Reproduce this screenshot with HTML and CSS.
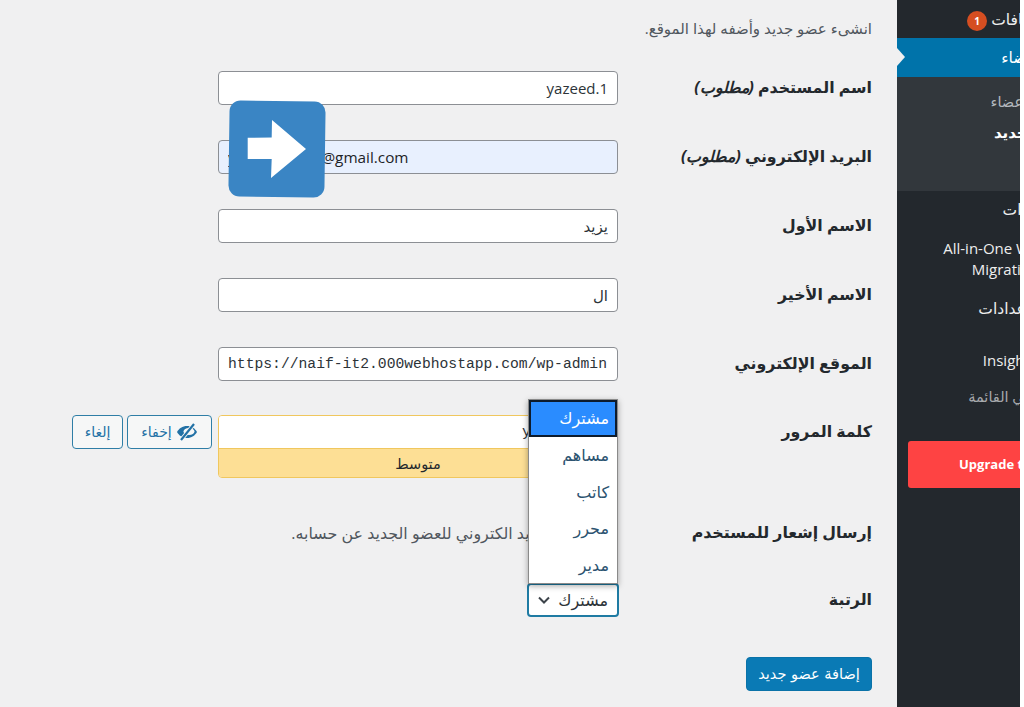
FILE: index.html
```html
<!DOCTYPE html>
<html lang="ar">
<head>
    <meta charset="UTF-8">
    <title>إضافة عضو جديد</title>
    <link rel="stylesheet" href="styles.css">
</head>
<body>
<div class="page">
    <main class="content" dir="rtl">
        <p class="intro">انشىء عضو جديد وأضفه لهذا الموقع.</p>

        <div class="row">
            <label class="rowLabel">اسم المستخدم <em>(مطلوب)</em></label>
            <div class="field"><input class="textInput" type="text" value="yazeed.1"></div>
        </div>
        <div class="row">
            <label class="rowLabel">البريد الإلكتروني <em>(مطلوب)</em></label>
            <div class="field"><input class="textInput emailInput" dir="ltr" type="text" value="yazeed.naifl1@gmail.com"></div>
        </div>
        <div class="row">
            <label class="rowLabel">الاسم الأول</label>
            <div class="field"><input class="textInput" type="text" value="يزيد"></div>
        </div>
        <div class="row">
            <label class="rowLabel">الاسم الأخير</label>
            <div class="field"><input class="textInput" type="text" value="ال"></div>
        </div>
        <div class="row">
            <label class="rowLabel">الموقع الإلكتروني</label>
            <div class="field"><input class="textInput urlInput" dir="ltr" type="text" value="https://naif-it2.000webhostapp.com/wp-admin"></div>
        </div>
        <div class="row passRow">
            <label class="rowLabel">كلمة المرور</label>
            <div class="field passField">
                <div class="passBox">
                    <input class="passInput" type="text" value="y7Hq2#kP9x">
                    <div class="strength">متوسط</div>
                </div>
                <button class="ghostBtn hideBtn" type="button">
                    <svg width="22" height="18" viewBox="0 0 22 18">
                        <path d="M11 3C6.500 3 2.800 5.600 1 9c1.800 3.400 5.500 6 10 6s8.200-2.600 10-6c-1.800-3.400-5.500-6-10-6z" fill="#2271a5"/>
                        <ellipse cx="13" cy="8.500" rx="5.500" ry="3.500" fill="#f6f7f7"/>
                        <path d="M5 17L18 1" stroke="#f6f7f7" stroke-width="4"/>
                        <path d="M5 17L18 1" stroke="#2271a5" stroke-width="2.200"/>
                    </svg>
                    إخفاء
                </button>
                <button class="ghostBtn" type="button">إلغاء</button>
            </div>
        </div>
        <div class="row notifyRow">
            <label class="rowLabel">إرسال إشعار للمستخدم</label>
            <div class="field notifyField">
                <input class="check" type="checkbox">
                <span>أرسل البريد الكتروني للعضو الجديد عن حسابه.</span>
            </div>
        </div>
        <div class="row roleRow">
            <label class="rowLabel">الرتبة</label>
            <div class="field">
                <div class="roleSelect">
                    <span>مشترك</span>
                    <svg width="14" height="10" viewBox="0 0 14 10"><path d="M2 2.500l5 5 5-5" fill="none" stroke="#3c434a" stroke-width="2"/></svg>
                    <ul class="roleMenu">
                        <li class="currentRole">مشترك</li>
                        <li>مساهم</li>
                        <li>كاتب</li>
                        <li>محرر</li>
                        <li>مدير</li>
                    </ul>
                </div>
            </div>
        </div>
        <button class="submitBtn" type="button">إضافة عضو جديد</button>

        <svg class="playBadge" width="108" height="108" viewBox="0 0 108 108">
            <rect x="5" y="5" width="96" height="96" rx="11" fill="#3a85c4" transform="rotate(0.8 53 53)"/>
            <path d="M23.700 41.700L47.700 41.500 48 24 82 53 47 82 47.700 63 23.700 63z" fill="#fff"/>
        </svg>
    </main>

    <nav class="sidebar">
        <ul class="menu" dir="rtl">
            <li class="menuItem pluginsItem">الإضافات <b class="badge">1</b></li>
            <li class="menuItem activeItem">الأعضاء</li>
            <li class="subMenu">
                <div class="subItem">كل الأعضاء</div>
                <div class="subItem currentSub">عضو جديد</div>
            </li>
            <li class="menuItem toolsItem">الأدوات</li>
            <li class="menuItem migrationItem">All-in-One WP Migration</li>
            <li class="menuItem settingsItem">الإعدادات</li>
            <li class="menuItem insightsItem">Insights</li>
            <li class="menuItem collapseItem">طي القائمة</li>
            <li class="upgrade">Upgrade to Pro</li>
        </ul>
    </nav>
</div>
</body>
</html>
```

FILE: styles.css
```css
* {
    margin: 0;
    padding: 0;
    box-sizing: border-box;
}

ul {
    list-style: none;
}

html, body {
    height: 100%;
    background-color: #fff;
    overflow: hidden;
}

body {
    font: 400 14px/20px "Open Sans", "DejaVu Sans", sans-serif;
    color: #2c3338;
}

.page {
    display: flex;
    width: 1024px;
    height: 707px;
}

/* main form */
.content {
    position: relative;
    width: 897px;
    height: 707px;
    flex: none;
    padding: 18px 25px 0 0;
    background-color: #f0f0f1;
}

.intro {
    font-size: 15px;
    color: #50575e;
    margin-bottom: 33px;
}

.row {
    display: grid;
    grid-template-columns: 254px 1fr;
    height: 34px;
    margin-bottom: 35px;
}

.passRow {
    height: 62px;
    margin-top: -1px;
    margin-bottom: 39px;
}

.notifyRow {
    margin-bottom: 33px;
}

.roleRow {
    margin-bottom: 40px;
}

.rowLabel {
    font-size: 15.800px;
    font-weight: 700;
    line-height: 33px;
    color: #23282d;
}

.field {
    display: flex;
    align-items: flex-start;
}

.textInput {
    width: 400px;
    height: 34px;
    padding: 0 9px;
    font: 400 15px "Open Sans", "DejaVu Sans", sans-serif;
    color: #2c3338;
    background-color: #fff;
    border: 1px solid #8c8f94;
    border-radius: 4px;
}

.emailInput {
    font-size: 15.300px;
    background-color: #e8f0fe;
    color: #1d2327;
}

.urlInput {
    font: 400 14.700px "Liberation Mono", monospace;
}

.passBox {
    width: 400px;
    margin-left: 6px;
    flex: none;
    border: 1px solid #f0c75e;
    border-radius: 4px;
    overflow: hidden;
}

.passInput {
    display: block;
    width: 100%;
    height: 32px;
    padding: 0 5px;
    border: 0;
    font: 400 15px "Liberation Mono", monospace;
    color: #2c3338;
    background-color: #fff;
}

.strength {
    height: 29px;
    font-size: 14.500px;
    line-height: 29px;
    text-align: center;
    color: #23282d;
    background-color: #fddf95;
    border-top: 1px solid #f0c75e;
}

.ghostBtn {
    display: flex;
    align-items: center;
    justify-content: center;
    gap: 4px;
    width: 51px;
    height: 34px;
    flex: none;
    font: 400 14px "DejaVu Sans", sans-serif;
    color: #2271a5;
    background-color: #f6f7f7;
    border: 1px solid #2f7ea6;
    border-radius: 4px;
}

.hideBtn {
    width: 85px;
    margin-left: 4px;
}

.notifyField {
    align-items: center;
    font-size: 15.900px;
    color: #50575e;
    gap: 8px;
}

.check {
    width: 16px;
    height: 16px;
    flex: none;
    appearance: none;
    background-color: #fff;
    border: 1px solid #8c8f94;
    border-radius: 4px;
}

.roleSelect {
    position: relative;
    display: flex;
    align-items: center;
    justify-content: space-between;
    width: 92px;
    height: 34px;
    margin-right: -1px;
    padding: 0 9px 0 8px;
    font-size: 16px;
    color: #2c3338;
    background-color: #fff;
    border: 2px solid #1f7ba3;
    border-radius: 4px;
}

.roleMenu {
    position: absolute;
    right: -1px;
    bottom: 31px;
    width: 90px;
    height: 185px;
    background-color: #fff;
    border: 1px solid #8a8a8a;
    box-shadow: 0 2px 6px rgba(0, 0, 0, 0.35);
}

.roleMenu li {
    height: 36.500px;
    padding: 0 8px;
    font-size: 16px;
    line-height: 36px;
    color: #2c5370;
}

.roleMenu .currentRole {
    height: 37px;
    color: #fff;
    background-color: #2a8cff;
    border: 2px solid #0d1b2c;
    padding: 0 6px;
    line-height: 33px;
}

.submitBtn {
    display: block;
    width: 126px;
    height: 34px;
    font: 400 14.500px "DejaVu Sans", sans-serif;
    color: #fff;
    background-color: #0a7ab5;
    border: 1px solid #0a72a8;
    border-radius: 4px;
}

.playBadge {
    position: absolute;
    top: 96px;
    left: 224px;
}

/* admin sidebar, cut on its right side */
.sidebar {
    width: 123px;
    height: 707px;
    flex: none;
    overflow: hidden;
    background-color: #23282d;
}

.menu {
    width: 184px;
    color: #eee;
}

.menuItem {
    position: relative;
    padding-right: 32px;
    font-size: 15.500px;
}

.pluginsItem {
    height: 38px;
    padding-top: 9px;
}

.badge {
    display: inline-block;
    width: 20px;
    height: 20px;
    font: 700 10px/20px "Open Sans", sans-serif;
    text-align: center;
    color: #fff;
    background-color: #d54e21;
    border-radius: 50%;
}

.activeItem {
    height: 39px;
    padding-top: 9px;
    color: #fff;
    background-color: #0073aa;
}

.activeItem::after {
    content: "";
    position: absolute;
    top: 10px;
    left: 0;
    border-style: solid;
    border-width: 9px 0 9px 8px;
    border-color: transparent transparent transparent #f0f0f1;
}

.subMenu {
    height: 114px;
    padding-top: 15px;
    background-color: #32373c;
}

.subItem {
    height: 30px;
    padding-right: 24px;
    font-size: 14.500px;
    color: #b4b9be;
}

.currentSub {
    padding-right: 15px;
    font-weight: 700;
    font-size: 15px;
    color: #fff;
}

.toolsItem {
    height: 38px;
    padding-top: 8px;
}

.migrationItem {
    height: 58px;
    padding-top: 9px;
    padding-right: 42px;
    font-size: 15px;
    line-height: 21px;
}

.settingsItem {
    height: 48px;
    padding-top: 11px;
    padding-right: 42px;
}

.insightsItem {
    height: 46px;
    padding-top: 15px;
    padding-right: 44px;
    font-size: 15px;
}

.collapseItem {
    height: 60px;
    padding-top: 6px;
    padding-right: 45px;
    font-size: 14.500px;
    color: #a7aaad;
}

.upgrade {
    width: 173px;
    height: 47px;
    padding-left: 51px;
    font: 700 13px/47px "Open Sans", sans-serif;
    color: #fff;
    text-align: left;
    direction: ltr;
    background-color: #fe4343;
    border-radius: 3px;
}
```
